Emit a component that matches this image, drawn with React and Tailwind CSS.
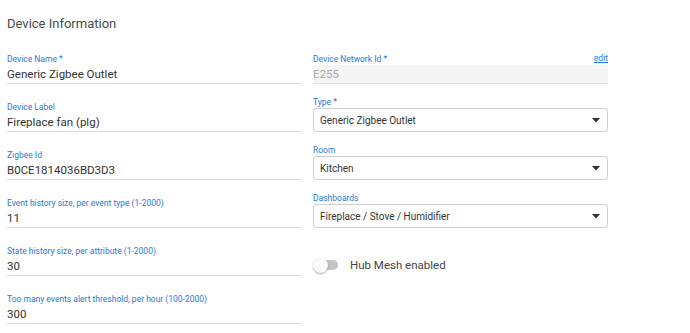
import React from "react";

const Label = ({ children }) => (
  <div className="text-[8.5px] leading-[10px] text-[#1e7bd6]">{children}</div>
);

const TextField = ({ label, value }) => (
  <div className="flex flex-col justify-end h-[48px]">
    <Label>{label}</Label>
    <div className="mt-[2px] h-[16px] leading-[16px] text-[11.5px] text-[#333] border-b border-[#dcdcdc] box-content pb-[1px]">
      {value}
    </div>
  </div>
);

const Caret = () => (
  <svg width="8" height="5" viewBox="0 0 8 5" className="shrink-0">
    <path d="M0 0 L8 0 L4 4.5 Z" fill="#333" />
  </svg>
);

const SelectField = ({ label, value }) => (
  <div className="flex flex-col justify-end h-[48px]">
    <Label>{label}</Label>
    <div className="mt-[1px] h-[24px] flex items-center justify-between rounded-[3px] border border-[#cfcfcf] pl-[6px] pr-[7px] text-[10px] text-[#333]">
      <span>{value}</span>
      <Caret />
    </div>
  </div>
);

export default function App() {
  return (
    <div
      className="w-[690px] h-[333px] bg-white overflow-hidden pl-[7px]"
      style={{ fontFamily: "Roboto, 'Liberation Sans', sans-serif" }}
    >
      <div className="pt-[16px] text-[13px] leading-[16px] text-[#4a4a4a]">Device Information</div>
      <div className="mt-[4px] grid grid-cols-[295px_295px] gap-x-[11px]">
        <div className="flex flex-col justify-end h-[48px]">
          <Label>Device Name *</Label>
          <div className="mt-[2px] h-[16px] leading-[16px] text-[11.5px] text-[#333] border-b border-[#dcdcdc] box-content pb-[1px]">
            Generic Zigbee Outlet
          </div>
        </div>
        <div className="flex flex-col justify-end h-[48px]">
          <div className="flex items-end justify-between">
            <Label>Device Network Id *</Label>
            <a className="text-[8.5px] leading-[10px] text-[#1e7bd6] underline mb-[1px]">edit</a>
          </div>
          <div className="mt-[1px] h-[18px] leading-[18px] bg-[#f5f5f5] border-b border-[#e2e2e2] box-content text-[11.5px] text-[#aaa]">
            E255
          </div>
        </div>

        <TextField label="Device Label" value="Fireplace fan (plg)" />
        <SelectField label="Type *" value="Generic Zigbee Outlet" />

        <TextField label="Zigbee Id" value="B0CE1814036BD3D3" />
        <SelectField label="Room" value="Kitchen" />

        <TextField label="Event history size, per event type (1-2000)" value="11" />
        <SelectField label="Dashboards" value="Fireplace / Stove / Humidifier" />

        <TextField label="State history size, per attribute (1-2000)" value="30" />
        <div className="flex items-end h-[48px] pb-[2px]">
          <div className="flex items-center">
            <div className="relative w-[25px] h-[15px] flex items-center">
              <div className="ml-[5px] w-[20px] h-[10px] rounded-full bg-[#c4c4c4]" />
              <div className="absolute left-0 top-0 w-[15px] h-[15px] rounded-full bg-[#fafafa] shadow-[0_1px_2px_rgba(0,0,0,0.35)]" />
            </div>
            <span className="ml-[12px] text-[11.5px] text-[#444]">Hub Mesh enabled</span>
          </div>
        </div>

        <TextField label="Too many events alert threshold, per hour (100-2000)" value="300" />
        <div />
      </div>
    </div>
  );
}
